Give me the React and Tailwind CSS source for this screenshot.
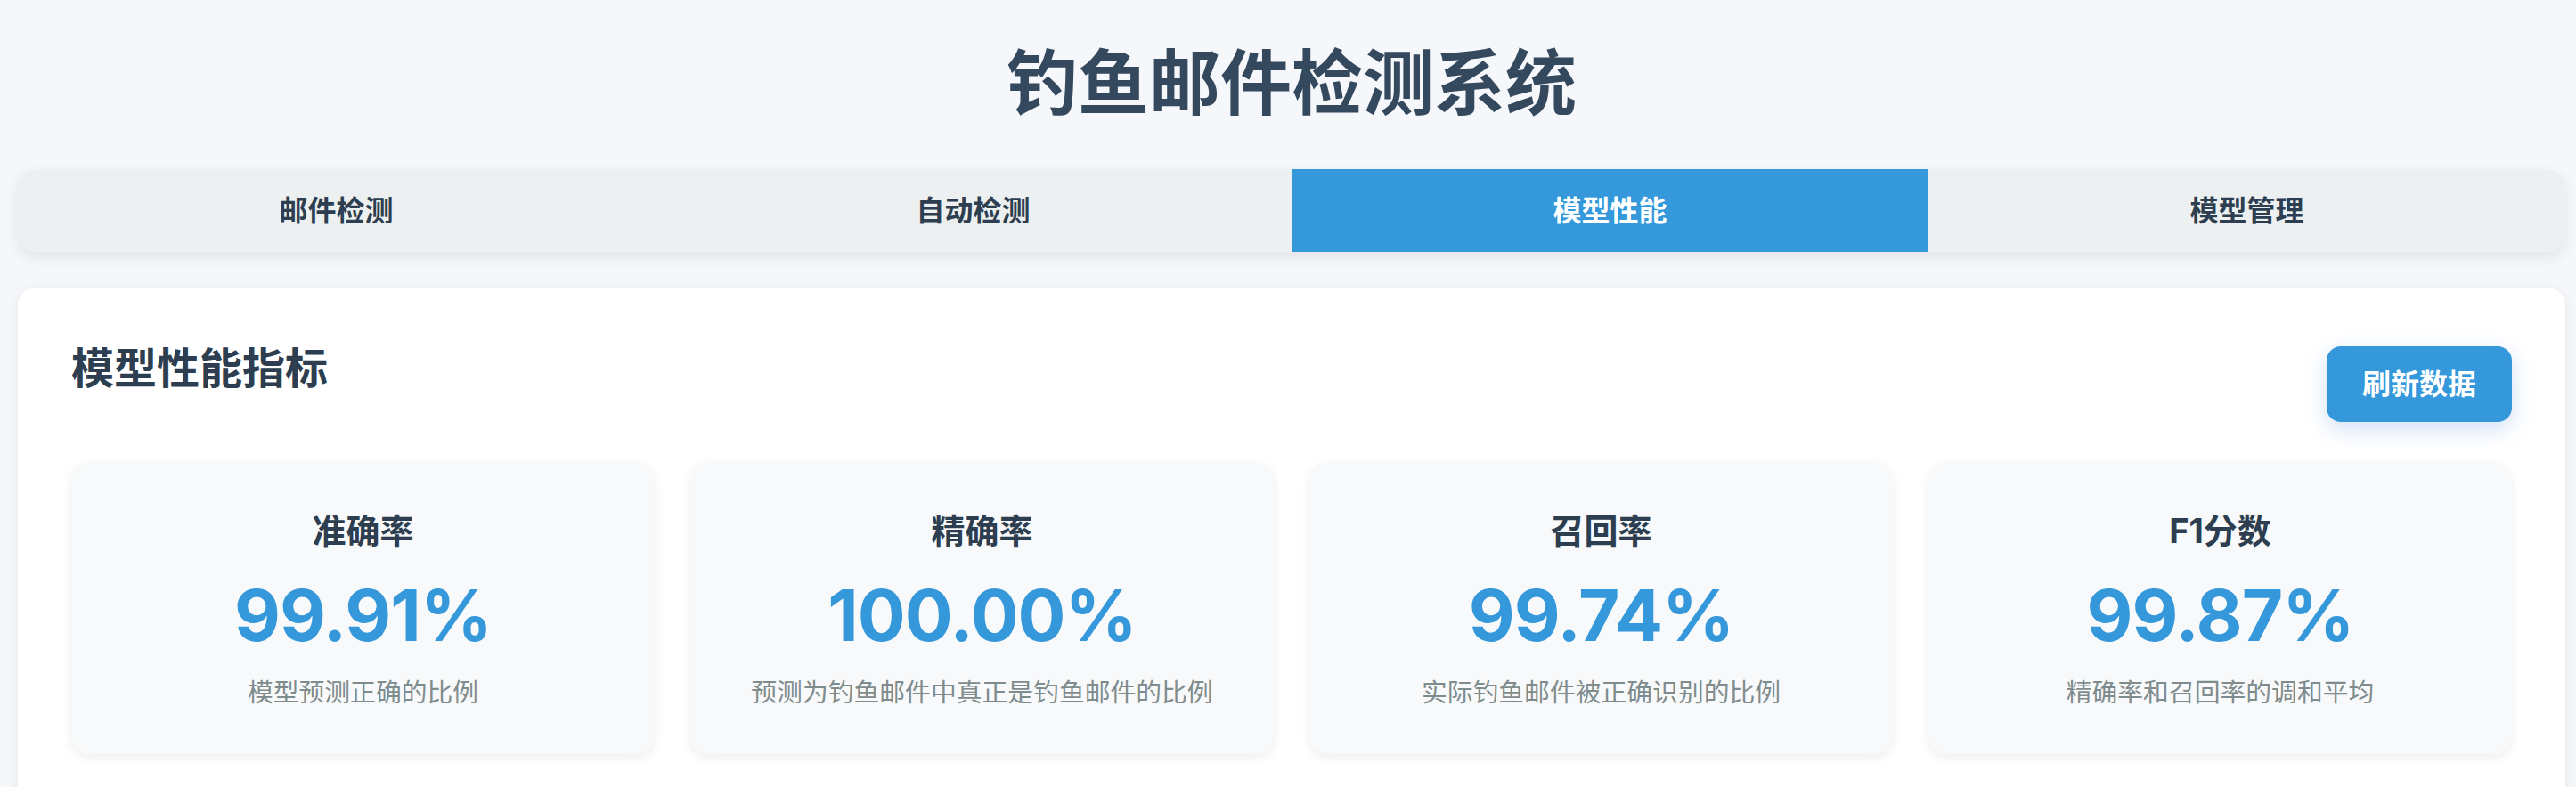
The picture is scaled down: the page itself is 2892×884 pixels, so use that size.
import { useState } from 'react';

const tabs = ['邮件检测', '自动检测', '模型性能', '模型管理'];

const metrics = [
  { label: '准确率', value: '99.91%', desc: '模型预测正确的比例' },
  { label: '精确率', value: '100.00%', desc: '预测为钓鱼邮件中真正是钓鱼邮件的比例' },
  { label: '召回率', value: '99.74%', desc: '实际钓鱼邮件被正确识别的比例' },
  { label: 'F1分数', value: '99.87%', desc: '精确率和召回率的调和平均' },
];

const MetricCard = ({ label, value, desc }) => (
  <div className="bg-[#f8f9fa] rounded-[20px] shadow-[0_4px_12px_rgba(0,0,0,0.07)] pt-[51px] pb-[49px] px-[20px] flex flex-col items-center text-center">
    <h3 className="text-[38px] leading-[52px] font-bold text-[#2c3e50]">{label}</h3>
    <div className="mt-[21px] text-[80px] leading-[96px] font-bold text-[#3498db] tracking-[-1px]">{value}</div>
    <p className="mt-[19px] text-[28.8px] leading-[40px] text-[#7f8c8d]">{desc}</p>
  </div>
);

export default function App() {
  const [active, setActive] = useState(2);

  return (
    <div className="h-screen overflow-hidden bg-[#f5f7fa] pl-[20px] pr-[12px] pt-[45px] font-['Inter','Noto_Sans_CJK_SC',sans-serif]">
      {/* Header */}
      <h1 className="text-center text-[80px] leading-[96px] font-bold text-[#34495e]">钓鱼邮件检测系统</h1>

      {/* Tabs */}
      <nav className="mt-[49px] grid grid-cols-4 bg-[#ecf0f1] rounded-[20px] overflow-hidden shadow-[0_6px_16px_rgba(0,0,0,0.08)]">
        {tabs.map((t, i) => (
          <button
            key={t}
            onClick={() => setActive(i)}
            className={
              i === active
                ? 'h-[93px] text-[32px] font-bold bg-[#3498db] text-white'
                : 'h-[93px] text-[32px] font-bold text-[#2c3e50]'
            }
          >
            {t}
          </button>
        ))}
      </nav>

      {/* Performance panel */}
      <section className="mt-[40px] bg-white rounded-[20px] shadow-[0_4px_16px_rgba(0,0,0,0.07)] p-[60px]">
        <div className="flex items-start justify-between mb-[45px]">
          <h2 className="text-[48px] leading-[62px] font-bold text-[#2c3e50]">模型性能指标</h2>
          <button className="mt-[6px] bg-[#3498db] text-white text-[32px] leading-[37px] font-bold px-[40px] py-[24px] rounded-[16px] shadow-[0_8px_24px_rgba(52,120,219,0.22)]">
            刷新数据
          </button>
        </div>

        <div className="grid grid-cols-4 gap-[40px]">
          {metrics.map((m) => (
            <MetricCard key={m.label} {...m} />
          ))}
        </div>
      </section>
    </div>
  );
}
